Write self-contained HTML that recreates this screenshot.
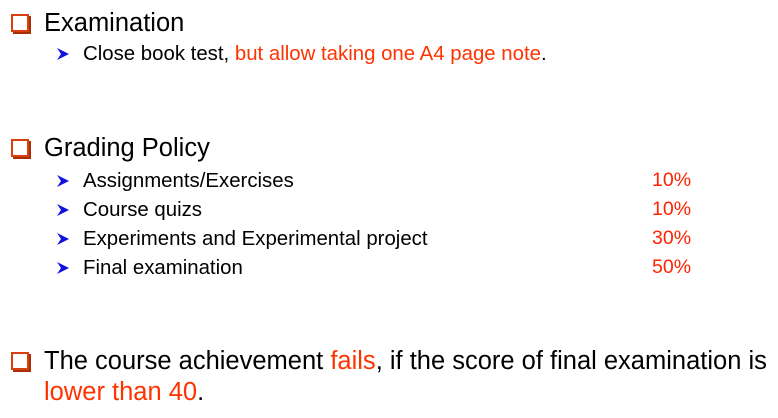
<html><head><style>
body{margin:0;width:778px;height:418px;background:#fff;font-family:"Liberation Sans",sans-serif;position:relative;overflow:hidden}
.t{position:absolute;white-space:nowrap;line-height:1}
.h{font-size:25.5px;left:44px}
.s{font-size:20.4px;left:83px}
.r{color:#ff3300}
.p{font-size:19.5px;left:652px;color:#ff2200}
.box{position:absolute;left:11px;width:14px;height:14px;border:2px solid #d9400f;box-shadow:2px 2px 0 #a82f08}
svg{position:absolute;left:57px}
</style></head><body>
<div class="box" style="top:14px"></div><div class="t h" style="top:11px">Examination</div>
<svg style="top:48px" width="12" height="12" viewBox="0 0 12 12"><path d="M0 0 L12 6 L0 12 L4 6Z" fill="#1010e0"/></svg>
<div class="t s" style="top:44px">Close book test, <span class="r">but allow taking one A4 page note</span>.</div>

<div class="box" style="top:139px"></div><div class="t h" style="top:136px">Grading Policy</div>
<svg style="top:175px" width="12" height="12" viewBox="0 0 12 12"><path d="M0 0 L12 6 L0 12 L4 6Z" fill="#1010e0"/></svg>
<div class="t s" style="top:171px">Assignments/Exercises</div><div class="t p" style="top:171px">10%</div>
<svg style="top:204px" width="12" height="12" viewBox="0 0 12 12"><path d="M0 0 L12 6 L0 12 L4 6Z" fill="#1010e0"/></svg>
<div class="t s" style="top:200px">Course quizs</div><div class="t p" style="top:200px">10%</div>
<svg style="top:233px" width="12" height="12" viewBox="0 0 12 12"><path d="M0 0 L12 6 L0 12 L4 6Z" fill="#1010e0"/></svg>
<div class="t s" style="top:229px">Experiments and Experimental project</div><div class="t p" style="top:229px">30%</div>
<svg style="top:262px" width="12" height="12" viewBox="0 0 12 12"><path d="M0 0 L12 6 L0 12 L4 6Z" fill="#1010e0"/></svg>
<div class="t s" style="top:258px">Final examination</div><div class="t p" style="top:258px">50%</div>

<div class="box" style="top:352px"></div>
<div class="t h" style="top:349px">The course achievement <span class="r">fails</span>, if the score of final examination is</div>
<div class="t h" style="top:380px"><span class="r">lower than 40</span>.</div>
</body></html>
